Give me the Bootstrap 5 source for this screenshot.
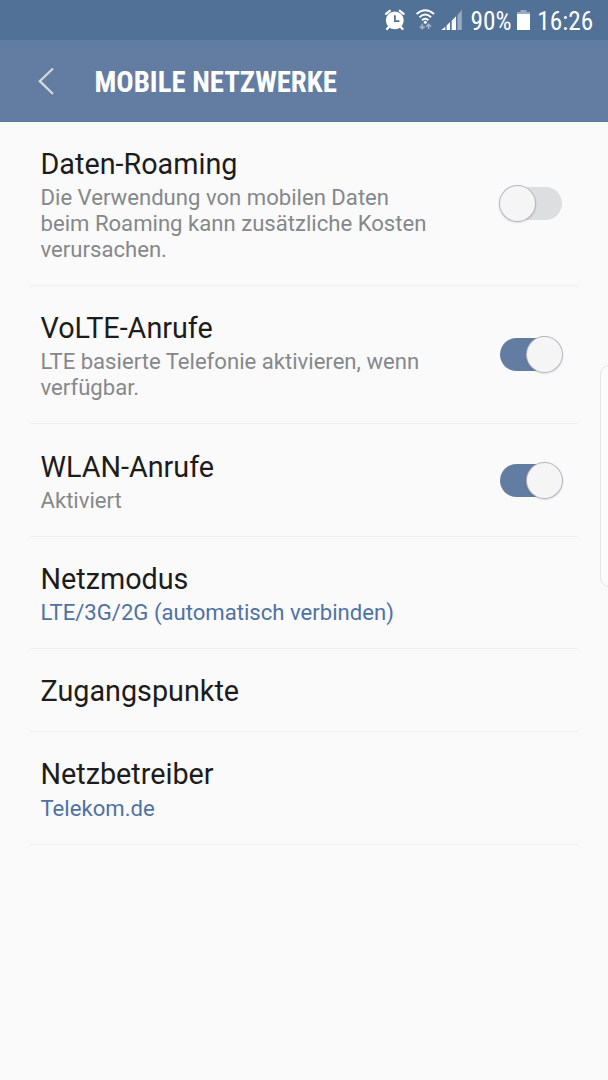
<!DOCTYPE html>
<html lang="de">
<head>
<meta charset="utf-8">
<meta name="viewport" content="width=device-width, initial-scale=1">
<title>Mobile Netzwerke</title>
<link href="https://cdn.jsdelivr.net/npm/bootstrap@5.3.0/dist/css/bootstrap.min.css" rel="stylesheet">
<style>
  body { font-family: Roboto, "Liberation Sans", sans-serif; background: #fafafa; color: #1c1c1c; height: 1080px; overflow: hidden; }
  .status-bar { height: 40px; background: #517196; padding-left: 384px; }
  .status-text { font-family: "Roboto Condensed", Roboto, sans-serif; font-size: 25.3px; line-height: 43px; color: #fff; }
  .title-bar { height: 81.5px; background: #637da2; border-top: 1px solid #5d7a9f; border-bottom: 1px solid #5b789e; }
  .back-btn { margin-left: 37px; width: 57.5px; }
  .page-title { font-family: "Roboto Condensed", Roboto, sans-serif; font-size: 28.8px; line-height: 34px; font-weight: 700; color: #fff; padding-top: 2px; }
  .settings { margin: 0 30px; border-radius: 0; }
  .setting { border: 0; border-bottom: 1px solid #eeeff0; border-radius: 0 !important; padding: 25.3px 16px 22.9px 10.5px; color: inherit; background: transparent; }
  .setting-title { font-size: 28.75px; line-height: 34px; }
  .setting-text { font-size: 22.12px; line-height: 26px; margin-top: 3.2px; color: #85888b; }
  .setting-value { color: #4f72a3; }
  .toggle { width: 62.5px; height: 33px; margin-bottom: 2px; border-radius: 17px; background: #dddee0; }
  .toggle-knob { width: 35px; height: 35px; margin: -1px 0; border-radius: 50%; background: #f5f5f5; box-shadow: 0 0 0 1px #b4b7bd, 0 1px 2px 1px rgba(0,0,0,.12); }
  .toggle.is-on { background: #637da2; }
  .edge-handle { right: -12px; top: 365px; width: 20px; height: 222px; border: 1px solid #e6e6e6; border-radius: 9px; background: #fbfbfb; }
</style>
</head>
<body class="position-relative">
<header>
  <div class="status-bar d-flex">
    <svg width="86.5" height="40" viewBox="384 0 86.5 40" fill="#fff" class="flex-shrink-0">
      <circle cx="394.8" cy="20.4" r="8.9"/>
      <path d="M386 13.8 389.8 10.8M403.6 13.8 399.8 10.8M389.3 26.5 387 29M400.3 26.5 402.6 29" stroke="#fff" stroke-width="2.3" stroke-linecap="round"/>
      <path d="M394.9 15.2V21.2H399.4" fill="none" stroke="#517196" stroke-width="1.8"/>
      <g fill="none" stroke="#fff" stroke-width="1.9">
        <path d="M416.6 13.9Q425.3 6.6 434 13.9"/>
        <path d="M419.5 17.2Q425.3 12 431.1 17.2"/>
        <path d="M422.1 20.3Q425.3 17.2 428.5 20.3"/>
      </g>
      <circle cx="425.3" cy="22.3" r="1.5"/>
      <path d="M422.2 23.8V28M419.8 26.4 422.2 28.7 424.6 26.4M428.6 29V25M426.2 26.6 428.6 24.3 431 26.6" fill="none" stroke="#a3b3c7" stroke-width="1.6"/>
      <path d="M441.3 30 445.3 26.8V30zM446.6 25.5 450 22V30H446.6zM451.7 20.8 456 16.3V30H451.7z"/>
      <path d="M457.4 15 461.8 10V30h-4.4z" fill="#97aac1"/>
    </svg>
    <div class="status-text text-nowrap" style="width:45.5px">90%</div>
    <svg width="21.3" height="40" viewBox="516 0 21.3 40" class="flex-shrink-0">
      <path d="M520.5 10H526.5V12H530V15H517V12H520.5z" fill="#97aac1"/>
      <path d="M517 14H530V30H517z" fill="#fff"/>
    </svg>
    <div class="status-text text-nowrap">16:26</div>
  </div>
  <nav class="title-bar d-flex align-items-center">
    <a href="#" class="back-btn d-flex" aria-label="Zurück">
      <svg width="20" height="28" viewBox="0 0 20 28" fill="none" stroke="#d4d7dc" stroke-width="2.3"><path d="M16 1.5 2.8 14.2 16 27"/></svg>
    </a>
    <h1 class="page-title text-nowrap mb-0">MOBILE NETZWERKE</h1>
  </nav>
</header>
<main class="list-group settings">
  <div class="list-group-item setting d-flex align-items-center justify-content-between">
    <div>
      <div class="setting-title">Daten-Roaming</div>
      <div class="setting-text">Die Verwendung von mobilen Daten<br>beim Roaming kann zusätzliche Kosten<br>verursachen.</div>
    </div>
    <div class="toggle d-flex align-items-center" role="switch" aria-checked="false"><span class="toggle-knob"></span></div>
  </div>
  <div class="list-group-item setting d-flex align-items-center justify-content-between">
    <div>
      <div class="setting-title">VoLTE-Anrufe</div>
      <div class="setting-text">LTE basierte Telefonie aktivieren, wenn<br>verfügbar.</div>
    </div>
    <div class="toggle is-on d-flex align-items-center justify-content-end" role="switch" aria-checked="true"><span class="toggle-knob"></span></div>
  </div>
  <div class="list-group-item setting d-flex align-items-center justify-content-between">
    <div>
      <div class="setting-title">WLAN-Anrufe</div>
      <div class="setting-text">Aktiviert</div>
    </div>
    <div class="toggle is-on d-flex align-items-center justify-content-end" role="switch" aria-checked="true"><span class="toggle-knob"></span></div>
  </div>
  <div class="list-group-item setting">
    <div class="setting-title">Netzmodus</div>
    <div class="setting-text setting-value">LTE/3G/2G (automatisch verbinden)</div>
  </div>
  <div class="list-group-item setting">
    <div class="setting-title">Zugangspunkte</div>
  </div>
  <div class="list-group-item setting">
    <div class="setting-title">Netzbetreiber</div>
    <div class="setting-text setting-value">Telekom.de</div>
  </div>
</main>
<div class="edge-handle position-absolute"></div>
<script src="https://cdn.jsdelivr.net/npm/bootstrap@5.3.0/dist/js/bootstrap.bundle.min.js"></script>
</body>
</html>
